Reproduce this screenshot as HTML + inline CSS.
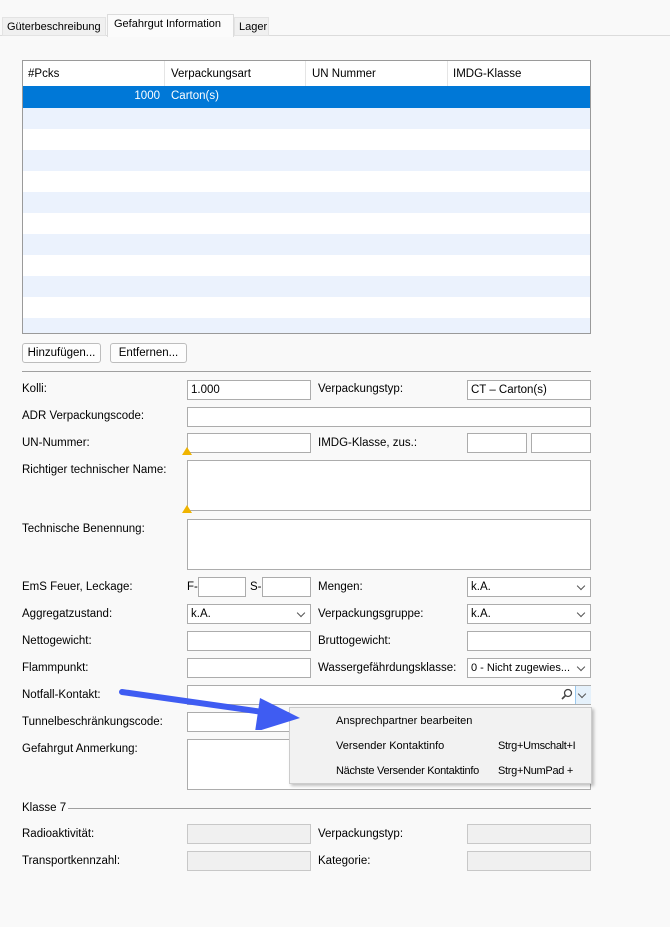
<!DOCTYPE html><html><head><style>
body{margin:0;width:670px;height:927px;background:#f9f9f9;font-family:"Liberation Sans",sans-serif;font-size:11.5px;color:#000;position:relative;overflow:hidden}
*{white-space:nowrap}
.a{position:absolute}
.in{position:absolute;background:#fff;border:1px solid #acacac;box-sizing:border-box;height:20px;padding:2px 3px;line-height:14px;overflow:hidden}
.dis{background:#f0f0f0;border-color:#c8c8c8}
.lb{position:absolute;left:22px}
.dd::after{content:"";position:absolute;right:6px;top:5px;width:5px;height:5px;border-right:1px solid #555;border-bottom:1px solid #555;transform:rotate(45deg)}
.warn{position:absolute;width:0;height:0;border-left:5px solid transparent;border-right:5px solid transparent;border-bottom:8px solid #f0b400}
.btn{position:absolute;top:343px;height:20px;border:1px solid #bdbdbd;border-radius:3px;background:#fdfdfd;box-sizing:border-box;text-align:center;line-height:18px}
</style></head><body>
<div class="a" style="left:0;top:35px;width:670px;border-top:1px solid #dcdcdc"></div>
<div class="a" style="left:2px;top:17px;width:104px;height:19px;background:#f0f0f0;border:1px solid #e3e3e3;box-sizing:border-box;padding:3px 4px;font-size:11px;overflow:hidden">Güterbeschreibung</div>
<div class="a" style="left:107px;top:14px;width:127px;height:23px;background:#fbfbfb;border:1px solid #dcdcdc;border-bottom:none;box-sizing:border-box;padding:3px 6px;font-size:11px;overflow:hidden">Gefahrgut Information</div>
<div class="a" style="left:234px;top:17px;width:35px;height:19px;background:#f0f0f0;border:1px solid #e3e3e3;box-sizing:border-box;padding:3px 4px;font-size:11px">Lager</div>
<div class="a" style="left:22px;top:60px;width:569px;height:274px;border:1px solid #9a9a9a;box-sizing:border-box;background:#fff;overflow:hidden">
<div class="a" style="left:0;top:0;width:569px;height:25px;background:#fff">
<span class="a" style="left:5px;top:7px">#Pcks</span><span class="a" style="left:148px;top:7px">Verpackungsart</span><span class="a" style="left:289px;top:7px">UN Nummer</span><span class="a" style="left:430px;top:7px">IMDG-Klasse</span>
<div class="a" style="left:141px;top:0;height:25px;border-left:1px solid #e5e5e5"></div><div class="a" style="left:282px;top:0;height:25px;border-left:1px solid #e5e5e5"></div><div class="a" style="left:424px;top:0;height:25px;border-left:1px solid #e5e5e5"></div></div>
<div class="a" style="left:0;top:25px;width:569px;height:22px;background:#0078d7;color:#fff"><span class="a" style="right:432px;top:4px">1000</span><span class="a" style="left:148px;top:4px">Carton(s)</span></div>
<div class="a" style="left:0;top:47px;width:569px;height:21px;background:#ebf2fd"></div>
<div class="a" style="left:0;top:89px;width:569px;height:21px;background:#ebf2fd"></div>
<div class="a" style="left:0;top:131px;width:569px;height:21px;background:#ebf2fd"></div>
<div class="a" style="left:0;top:173px;width:569px;height:21px;background:#ebf2fd"></div>
<div class="a" style="left:0;top:215px;width:569px;height:21px;background:#ebf2fd"></div>
<div class="a" style="left:0;top:257px;width:569px;height:21px;background:#ebf2fd"></div>
</div>
<div class="btn" style="left:22px;width:79px">Hinzufügen...</div>
<div class="btn" style="left:110px;width:77px">Entfernen...</div>
<div class="a" style="left:22px;top:371px;width:569px;border-top:1px solid #a0a0a0"></div>

<span class="lb" style="top:383px">Kolli:</span><div class="in" style="left:187px;top:380px;width:124px">1.000</div>
<span class="a" style="left:318px;top:383px">Verpackungstyp:</span><div class="in" style="left:467px;top:380px;width:124px">CT – Carton(s)</div>
<span class="lb" style="top:410px">ADR Verpackungscode:</span><div class="in" style="left:187px;top:407px;width:404px"></div>
<span class="lb" style="top:437px">UN-Nummer:</span><div class="in" style="left:187px;top:433px;width:124px"></div><div class="warn" style="left:182px;top:447px"></div>
<span class="a" style="left:318px;top:437px">IMDG-Klasse, zus.:</span><div class="in" style="left:467px;top:433px;width:60px"></div><div class="in" style="left:531px;top:433px;width:60px"></div>
<span class="lb" style="top:464px">Richtiger technischer Name:</span><div class="in" style="left:187px;top:460px;width:404px;height:51px"></div><div class="warn" style="left:182px;top:505px"></div>
<span class="lb" style="top:523px">Technische Benennung:</span><div class="in" style="left:187px;top:519px;width:404px;height:51px"></div>
<span class="lb" style="top:581px">EmS Feuer, Leckage:</span><span class="a" style="left:187px;top:581px">F-</span><div class="in" style="left:198px;top:577px;width:48px"></div><span class="a" style="left:250px;top:581px">S-</span><div class="in" style="left:262px;top:577px;width:49px"></div>
<span class="a" style="left:318px;top:581px">Mengen:</span><div class="in dd" style="left:467px;top:577px;width:124px">k.A.</div>
<span class="lb" style="top:608px">Aggregatzustand:</span><div class="in dd" style="left:187px;top:604px;width:124px">k.A.</div>
<span class="a" style="left:318px;top:608px">Verpackungsgruppe:</span><div class="in dd" style="left:467px;top:604px;width:124px">k.A.</div>
<span class="lb" style="top:635px">Nettogewicht:</span><div class="in" style="left:187px;top:631px;width:124px"></div>
<span class="a" style="left:318px;top:635px">Bruttogewicht:</span><div class="in" style="left:467px;top:631px;width:124px"></div>
<span class="lb" style="top:662px">Flammpunkt:</span><div class="in" style="left:187px;top:658px;width:124px"></div>
<span class="a" style="left:318px;top:662px">Wassergefährdungsklasse:</span><div class="in dd" style="left:467px;top:658px;width:124px;font-size:11px">0 - Nicht zugewies...</div>
<span class="lb" style="top:689px">Notfall-Kontakt:</span><div class="in" style="left:187px;top:685px;width:404px"></div>
<div class="a dd" style="left:575px;top:686px;width:15px;height:18px;background:#e5f1fb;border-left:1px solid #99c9ef"></div>
<svg class="a" style="left:560px;top:688px" width="14" height="14"><circle cx="8" cy="5" r="3.5" fill="none" stroke="#444" stroke-width="1.3"/><line x1="5.5" y1="7.5" x2="2" y2="11" stroke="#444" stroke-width="1.6"/></svg>
<span class="lb" style="top:716px">Tunnelbeschränkungscode:</span><div class="in" style="left:187px;top:712px;width:124px"></div>
<span class="lb" style="top:743px">Gefahrgut Anmerkung:</span><div class="in" style="left:187px;top:739px;width:404px;height:51px"></div>
<div class="a" style="left:289px;top:707px;width:303px;height:77px;background:#f2f2f2;border:1px solid #ccc;box-sizing:border-box;box-shadow:2px 2px 3px rgba(0,0,0,.25);font-size:11px">
<span class="a" style="left:46px;top:7px">Ansprechpartner bearbeiten</span>
<span class="a" style="left:46px;top:32px">Versender Kontaktinfo</span><span class="a" style="left:208px;top:32px;letter-spacing:-0.3px">Strg+Umschalt+I</span>
<span class="a" style="left:46px;top:57px;letter-spacing:-0.3px">Nächste Versender Kontaktinfo</span><span class="a" style="left:208px;top:57px;letter-spacing:-0.3px">Strg+NumPad +</span></div>
<svg class="a" style="left:110px;top:680px" width="200" height="50"><line x1="12" y1="12" x2="160" y2="33" stroke="#3f5cf2" stroke-width="6" stroke-linecap="round"/><polygon points="190,38 150,18 145,52" fill="#3f5cf2"/></svg>
<span class="lb" style="top:802px">Klasse 7</span><div class="a" style="left:68px;top:808px;width:523px;border-top:1px solid #a0a0a0"></div>
<span class="lb" style="top:828px">Radioaktivität:</span><div class="in dis" style="left:187px;top:824px;width:124px"></div>
<span class="a" style="left:318px;top:828px">Verpackungstyp:</span><div class="in dis" style="left:467px;top:824px;width:124px"></div>
<span class="lb" style="top:855px">Transportkennzahl:</span><div class="in dis" style="left:187px;top:851px;width:124px"></div>
<span class="a" style="left:318px;top:855px">Kategorie:</span><div class="in dis" style="left:467px;top:851px;width:124px"></div>
</body></html>
